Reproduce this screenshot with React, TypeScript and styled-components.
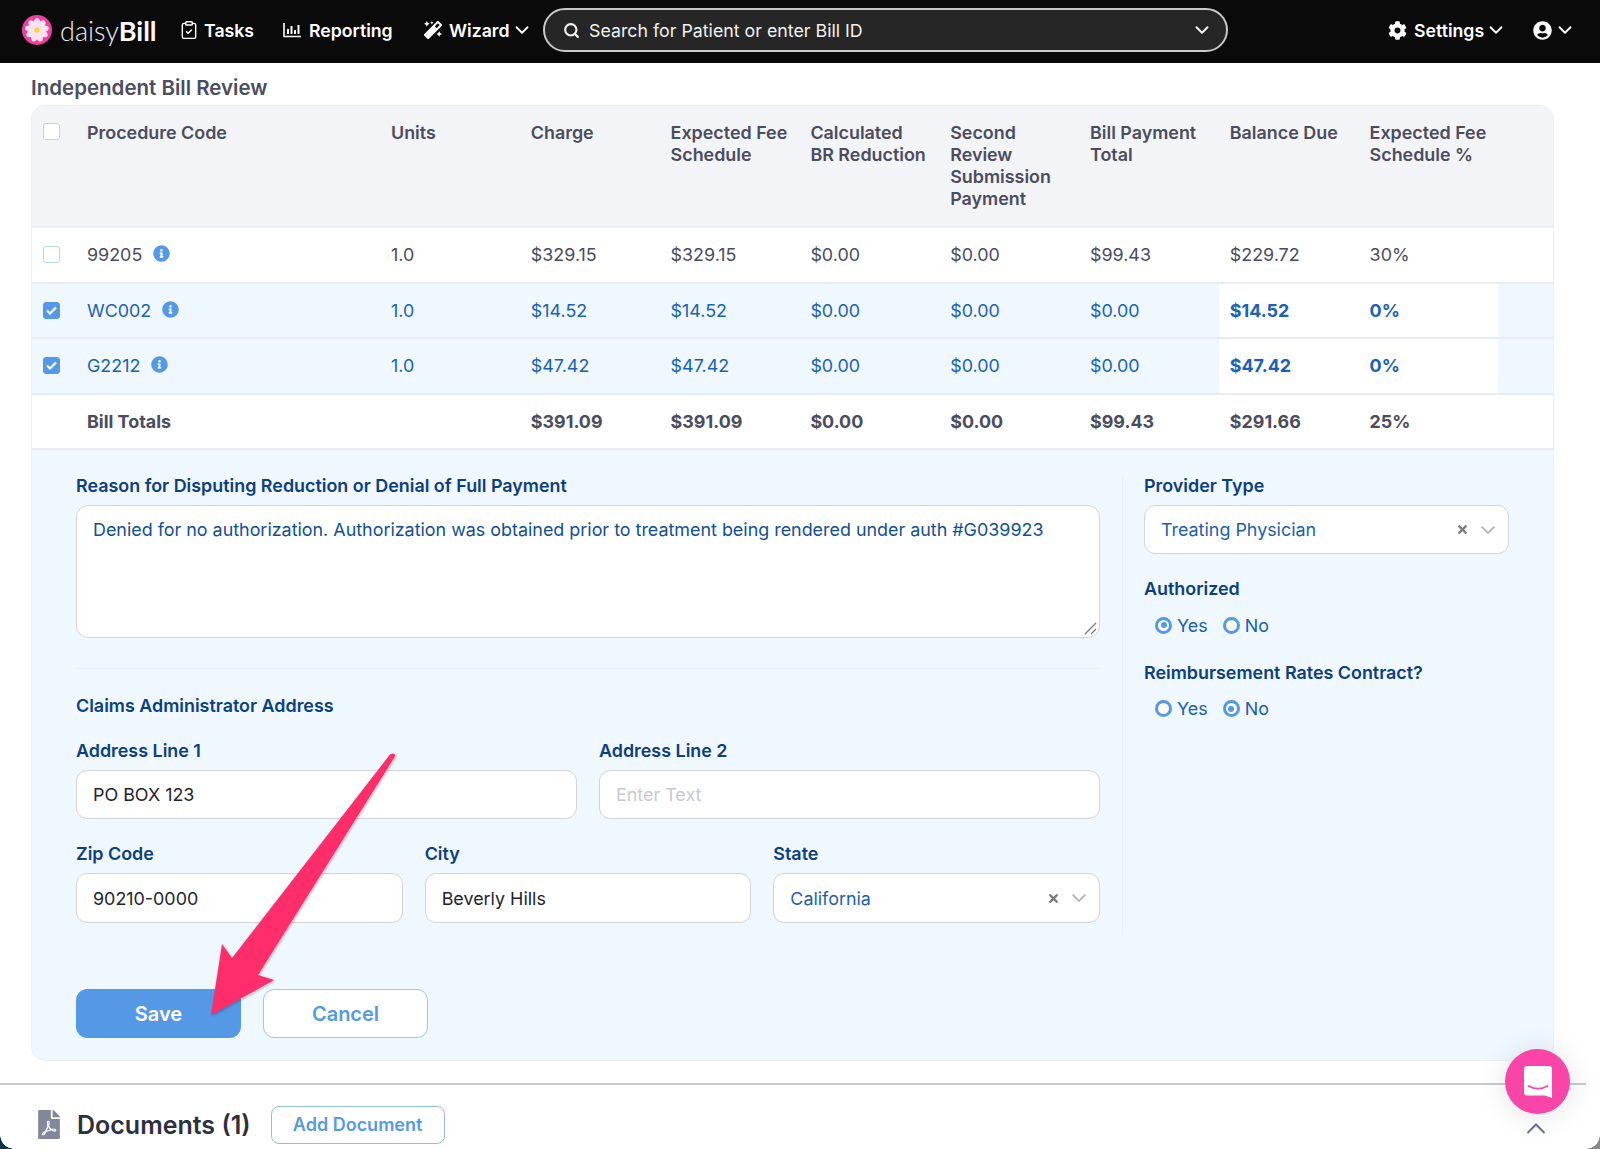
import styled, { createGlobalStyle } from 'styled-components';
import { ChevronDown, ClipboardCheck, Search } from 'lucide-react';
import { FaCog, FaFilePdf, FaInfoCircle, FaMagic, FaTimes, FaUserCircle } from 'react-icons/fa';

const font = `Inter, Lato, 'Liberation Sans', sans-serif`;

const GlobalStyle = createGlobalStyle`
  html, body { margin: 0; padding: 0; background: #fff; }
  * { box-sizing: border-box; }
  body { font-family: ${font}; }
`;

const Page = styled.div`
  position: relative;
  width: 1600px;
  height: 1149px;
  overflow: hidden;
  background: #fff;
`;

const Nav = styled.header`
  height: 63px;
  background: #0a0a0a;
  display: flex;
  align-items: center;
  padding: 0 0 3px 22px;
  color: #fff;
`;

const Logo = styled.div`
  display: flex;
  align-items: center;
  gap: 8px;
  width: 157px;
`;

const LogoText = styled.span`
  font-family: Lato, sans-serif;
  font-size: 27px;
  font-weight: 300;
  color: #eee;
  b { font-weight: 700; color: #fff; }
`;

const NavItem = styled.div<{ $width: number; $gap?: number }>`
  display: flex;
  align-items: center;
  gap: ${({ $gap }) => $gap ?? 7}px;
  width: ${({ $width }) => $width}px;
  font-size: 17.7px;
  font-weight: 600;
`;

const NavChevron = styled(ChevronDown)`
  margin-left: -6px;
`;

const SearchBox = styled.div`
  width: 685px;
  height: 44px;
  margin-right: 160px;
  border: 2px solid #c9c9c9;
  border-radius: 22px;
  background: #262626;
  display: flex;
  align-items: center;
  padding: 0 13px 0 18px;
  gap: 9px;
  font-size: 17.8px;
  color: #f2f2f2;
`;

const SearchText = styled.span`
  flex: 1;
`;

const Content = styled.main`
  padding: 13px 46px 0 31px;
`;

const SectionTitle = styled.h2`
  margin: 0 0 5px;
  font-size: 20.5px;
  line-height: 24px;
  font-weight: 600;
  color: #4b4c5e;
`;

const Card = styled.section`
  border: 1px solid #e6f1fb;
  border-radius: 14px;
  overflow: hidden;
  background: #eff7ff;
`;

const Row = styled.div<{ $selected?: boolean; $height?: number }>`
  display: grid;
  grid-template-columns: 44px 304px repeat(8, 139.8px) 1fr;
  height: ${({ $height }) => $height ?? 55.5}px;
  border-bottom: 2px solid #e8ebf0;
  background: ${({ $selected }) => ($selected ? '#eff7ff' : '#fff')};
  color: ${({ $selected }) => ($selected ? '#1a62b5' : '#4b4c5e')};
`;

const HeaderRow = styled(Row)`
  background: #f3f4f7;
  color: #4b4c5e;
`;

const HeadCell = styled.div`
  padding: 16px 0 0 11px;
  font-size: 17.9px;
  line-height: 22px;
  font-weight: 600;
  white-space: pre-line;
`;

const Cell = styled.div<{ $bold?: boolean; $white?: boolean }>`
  display: flex;
  align-items: center;
  padding: 0 11px;
  gap: 11px;
  font-size: 17.9px;
  font-weight: ${({ $bold }) => ($bold ? 700 : 400)};
  background: ${({ $white }) => ($white ? '#fff' : 'transparent')};
`;

const CheckCell = styled.div<{ $top?: boolean }>`
  display: flex;
  justify-content: flex-end;
  align-items: ${({ $top }) => ($top ? 'flex-start' : 'center')};
  padding-top: ${({ $top }) => ($top ? '17px' : '0')};
  padding-right: 16px;
`;

const Check = styled.span<{ $on?: boolean }>`
  width: 17px;
  height: 17px;
  border-radius: 3px;
  border: 1.5px solid ${({ $on }) => ($on ? '#5599e6' : '#b7d4f5')};
  background: ${({ $on }) => ($on ? '#5599e6' : '#fff')};
  display: flex;
  align-items: center;
  justify-content: center;
`;

const InfoIcon = styled(FaInfoCircle)`
  color: #5599e6;
  font-size: 17px;
  margin-top: -2px;
`;

const FormPanel = styled.div`
  display: flex;
  padding: 25px 0 22px 44px;
`;

const FormMain = styled.div`
  width: 1024px;
`;

const SidePanel = styled.aside`
  width: 387px;
  margin-left: 22px;
  padding-left: 21px;
  height: 460px;
  border-left: 1px solid #e6f1fb;
`;

const Label = styled.label`
  display: block;
  font-size: 17.9px;
  line-height: 22px;
  font-weight: 600;
  color: #0c3f80;
  margin-bottom: 8px;
`;

const SpacedLabel = styled(Label)`
  margin-top: 24px;
`;

const TextArea = styled.div`
  position: relative;
  height: 133px;
  background: #fff;
  border: 1.5px solid #d3d5d8;
  border-radius: 12px;
  padding: 13px 16px;
  font-size: 17.9px;
  line-height: 22px;
  color: #0f4f96;
`;

const ResizeGrip = styled.svg`
  position: absolute;
  right: 2px;
  bottom: 2px;
`;

const Divider = styled.hr`
  margin: 30px 0 26px;
  border: 0;
  border-top: 1px solid #e6f1fb;
`;

const AddressTitle = styled(Label)`
  margin-bottom: 23px;
`;

const FieldRow = styled.div<{ $cols: number }>`
  display: grid;
  grid-template-columns: repeat(${({ $cols }) => $cols}, 1fr);
  gap: 22px;
  margin-bottom: 24px;
`;

const Field = styled.div``;

const Input = styled.div<{ $placeholder?: boolean; $tall?: boolean }>`
  height: ${({ $tall }) => ($tall ? 50 : 49)}px;
  background: #fff;
  border: 1.5px solid #d3d5d8;
  border-radius: 11px;
  padding: 0 16px;
  display: flex;
  align-items: center;
  font-size: 17.9px;
  color: ${({ $placeholder }) => ($placeholder ? '#c8c9cf' : '#23242e')};
`;

const SelectBox = styled(Input)`
  color: #1a5fae;
  justify-content: space-between;
  padding-right: 8px;
`;

const SelectIcons = styled.span`
  display: flex;
  align-items: center;
  gap: 7px;
  color: #7d7d7d;
`;

const SelectChevron = styled(ChevronDown)`
  color: #a6a6a6;
`;

const RadioGroup = styled.div`
  display: flex;
  align-items: center;
  gap: 15px;
  padding: 6.5px 0 0 11px;
  margin-bottom: 26px;
`;

const RadioItem = styled.span`
  display: flex;
  align-items: center;
  gap: 5px;
  font-size: 17.9px;
  color: #1a5fae;
`;

const RadioDot = styled.span<{ $on?: boolean }>`
  width: 17px;
  height: 17px;
  border-radius: 50%;
  border: 3px solid #5599e6;
  background: #fff;
  display: flex;
  align-items: center;
  justify-content: center;
  &::after {
    content: '';
    width: 6px;
    height: 6px;
    border-radius: 50%;
    background: ${({ $on }) => ($on ? '#5599e6' : 'transparent')};
  }
`;

const Buttons = styled.div`
  display: flex;
  gap: 22px;
  margin-top: 66px;
`;

const Button = styled.button<{ $primary?: boolean }>`
  width: 165px;
  height: 49px;
  border-radius: 11px;
  border: 1.5px solid ${({ $primary }) => ($primary ? '#5599e6' : '#9cc5f2')};
  background: ${({ $primary }) => ($primary ? '#5599e6' : '#fff')};
  color: ${({ $primary }) => ($primary ? '#fff' : '#5599e6')};
  font-family: ${font};
  font-size: 20px;
  font-weight: 600;
`;

const DocumentsBar = styled.div`
  margin: 22px 14px 0 0;
  border-top: 2px solid #c9c9d2;
  display: flex;
  align-items: center;
  height: 66px;
  padding: 15px 0 0 38px;
`;

const DocIcon = styled(FaFilePdf)`
  color: #83869d;
  width: 22px;
  height: 29px;
`;

const DocTitle = styled.h3`
  margin: 0 20px 0 17px;
  font-size: 25px;
  font-weight: 600;
  color: #2d2f3c;
`;

const AddButton = styled.button`
  width: 174px;
  height: 38px;
  border: 1.5px solid #8fbdf0;
  border-radius: 8px;
  background: #fff;
  color: #5599e6;
  font-family: ${font};
  font-size: 18px;
  font-weight: 600;
`;

const CollapseIcon = styled.svg`
  margin-left: auto;
  margin-right: 40px;
  margin-top: 7px;
`;

const ChatBubble = styled.div`
  position: absolute;
  left: 1505px;
  top: 1049px;
  width: 65px;
  height: 65px;
  border-radius: 50%;
  background: #f945a8;
  box-shadow: 0 2px 30px rgba(0, 0, 0, 0.12);
  display: flex;
  align-items: center;
  justify-content: center;
`;

const ArrowOverlay = styled.svg`
  position: absolute;
  left: 0;
  top: 0;
  pointer-events: none;
`;

const Corner = styled.div<{ $right?: boolean }>`
  position: absolute;
  bottom: 0;
  ${({ $right }) => ($right ? 'right: 0;' : 'left: 0;')}
  width: 14px;
  height: 14px;
  background: ${({ $right }) =>
    $right
      ? 'radial-gradient(circle at top left, transparent 13.5px, #8a8a8a 14px)'
      : 'radial-gradient(circle at top right, transparent 13.5px, #0d3148 14px)'};
`;

const Flower = () => (
  <svg width="30" height="30" viewBox="0 0 30 30">
    <circle cx="15" cy="15" r="15" fill="#f03fa0" />
    {[0, 40, 80, 120, 160, 200, 240, 280, 320].map(a => (
      <ellipse key={a} cx="15" cy="8.5" rx="3.4" ry="5.6" fill="#fde3ef" transform={`rotate(${a} 15 15)`} />
    ))}
    <circle cx="15" cy="15" r="2.6" fill="#f8d62c" />
  </svg>
);

const ReportIcon = () => (
  <svg width="19" height="16" viewBox="0 0 19 16" fill="none" stroke="#fff" strokeWidth="1.6">
    <path d="M1 1v13.5h17" />
    <path d="M5 12V7M8.5 12V4M12 12V8M15.5 12V3" strokeWidth="2" />
  </svg>
);

const TickMark = () => (
  <svg width="11" height="9" viewBox="0 0 11 9" fill="none" stroke="#fff" strokeWidth="2.2">
    <path d="M1 4.5L4 7.5L10 1.5" />
  </svg>
);

const headers = [
  'Procedure Code',
  'Units',
  'Charge',
  'Expected Fee\nSchedule',
  'Calculated\nBR Reduction',
  'Second\nReview\nSubmission\nPayment',
  'Bill Payment\nTotal',
  'Balance Due',
  'Expected Fee\nSchedule %',
];

const rows = [
  { code: '99205', selected: false, values: ['1.0', '$329.15', '$329.15', '$0.00', '$0.00', '$99.43', '$229.72', '30%'] },
  { code: 'WC002', selected: true, values: ['1.0', '$14.52', '$14.52', '$0.00', '$0.00', '$0.00', '$14.52', '0%'] },
  { code: 'G2212', selected: true, values: ['1.0', '$47.42', '$47.42', '$0.00', '$0.00', '$0.00', '$47.42', '0%'] },
];

const totals = ['$391.09', '$391.09', '$0.00', '$0.00', '$99.43', '$291.66', '25%'];

const Radio = ({ label, on }: { label: string; on?: boolean }) => (
  <RadioItem>
    <RadioDot $on={on} />
    {label}
  </RadioItem>
);

const SelectControls = () => (
  <SelectIcons>
    <FaTimes size={13} />
    <SelectChevron size={24} strokeWidth={1.5} />
  </SelectIcons>
);

const App = () => (
  <Page>
    <GlobalStyle />
    <Nav>
      <Logo>
        <Flower />
        <LogoText>
          daisy<b>Bill</b>
        </LogoText>
      </Logo>
      <NavItem $width={104} $gap={5}>
        <ClipboardCheck size={20} strokeWidth={1.7} />
        Tasks
      </NavItem>
      <NavItem $width={141}>
        <ReportIcon />
        Reporting
      </NavItem>
      <NavItem $width={119}>
        <FaMagic size={18} />
        Wizard
        <NavChevron size={22} strokeWidth={2} />
      </NavItem>
      <SearchBox>
        <Search size={17} strokeWidth={3} />
        <SearchText>Search for Patient or enter Bill ID</SearchText>
        <ChevronDown size={22} strokeWidth={2.2} />
      </SearchBox>
      <NavItem $width={145}>
        <FaCog size={19} />
        Settings
        <NavChevron size={22} strokeWidth={2} />
      </NavItem>
      <NavItem $width={44} $gap={8}>
        <FaUserCircle size={19} />
        <NavChevron size={22} strokeWidth={2} />
      </NavItem>
    </Nav>

    <Content>
      <SectionTitle>Independent Bill Review</SectionTitle>
      <Card>
        <HeaderRow $height={122}>
          <CheckCell $top>
            <Check />
          </CheckCell>
          {headers.map(h => (
            <HeadCell key={h}>{h}</HeadCell>
          ))}
        </HeaderRow>
        {rows.map(row => (
          <Row key={row.code} $selected={row.selected}>
            <CheckCell>
              <Check $on={row.selected}>{row.selected && <TickMark />}</Check>
            </CheckCell>
            <Cell>
              {row.code} <InfoIcon />
            </Cell>
            {row.values.map((v, i) => (
              <Cell key={i} $bold={row.selected && i > 5} $white={row.selected && i > 5}>
                {v}
              </Cell>
            ))}
          </Row>
        ))}
        <Row>
          <CheckCell />
          <Cell $bold>Bill Totals</Cell>
          <Cell />
          {totals.map((v, i) => (
            <Cell key={i} $bold>
              {v}
            </Cell>
          ))}
        </Row>
        <FormPanel>
          <FormMain>
            <Label>Reason for Disputing Reduction or Denial of Full Payment</Label>
            <TextArea>
              Denied for no authorization. Authorization was obtained prior to treatment being rendered under auth #G039923
              <ResizeGrip width="14" height="14" viewBox="0 0 14 14" stroke="#777" strokeWidth="1.2">
                <path d="M2 13L13 2M8 13L13 8" />
              </ResizeGrip>
            </TextArea>
            <Divider />
            <AddressTitle>Claims Administrator Address</AddressTitle>
            <FieldRow $cols={2}>
              <Field>
                <Label>Address Line 1</Label>
                <Input>PO BOX 123</Input>
              </Field>
              <Field>
                <Label>Address Line 2</Label>
                <Input $placeholder>Enter Text</Input>
              </Field>
            </FieldRow>
            <FieldRow $cols={3}>
              <Field>
                <Label>Zip Code</Label>
                <Input $tall>90210-0000</Input>
              </Field>
              <Field>
                <Label>City</Label>
                <Input $tall>Beverly Hills</Input>
              </Field>
              <Field>
                <Label>State</Label>
                <SelectBox $tall>
                  California
                  <SelectControls />
                </SelectBox>
              </Field>
            </FieldRow>
            <Buttons>
              <Button $primary>Save</Button>
              <Button>Cancel</Button>
            </Buttons>
          </FormMain>
          <SidePanel>
            <Label>Provider Type</Label>
            <SelectBox>
              Treating Physician
              <SelectControls />
            </SelectBox>
            <SpacedLabel>Authorized</SpacedLabel>
            <RadioGroup>
              <Radio label="Yes" on />
              <Radio label="No" />
            </RadioGroup>
            <Label>Reimbursement Rates Contract?</Label>
            <RadioGroup>
              <Radio label="Yes" />
              <Radio label="No" on />
            </RadioGroup>
          </SidePanel>
        </FormPanel>
      </Card>
    </Content>

    <DocumentsBar>
      <DocIcon />
      <DocTitle>Documents (1)</DocTitle>
      <AddButton>Add Document</AddButton>
      <CollapseIcon width="20" height="12" viewBox="0 0 20 12" fill="none" stroke="#6c7285" strokeWidth="2">
        <path d="M1.5 11L10 2.5L18.5 11" />
      </CollapseIcon>
    </DocumentsBar>

    <ChatBubble>
      <svg width="30" height="34" viewBox="0 0 30 34">
        <path d="M4 1h22a3 3 0 0 1 3 3v29l-7-2.5H4a3 3 0 0 1-3-3V4a3 3 0 0 1 3-3z" fill="#fff" />
        <path d="M5.5 21c6 3.4 13 3.4 19 0" fill="none" stroke="#f945a8" strokeWidth="1.8" strokeLinecap="round" />
      </svg>
    </ChatBubble>

    <ArrowOverlay width="1600" height="1149" viewBox="0 0 1600 1149">
      <defs>
        <filter id="arrowShadow" x="-20%" y="-20%" width="140%" height="140%">
          <feDropShadow dx="1" dy="1" stdDeviation="1.5" floodColor="#000" floodOpacity="0.3" />
        </filter>
      </defs>
      <path
        d="M390 754.5 Q394 752 395.5 755.5 L258 975 L274 980 L211 1015 L222 944 L232 958 Z"
        fill="#ff2d6a"
        filter="url(#arrowShadow)"
      />
    </ArrowOverlay>

    <Corner />
    <Corner $right />
  </Page>
);

export default App;
